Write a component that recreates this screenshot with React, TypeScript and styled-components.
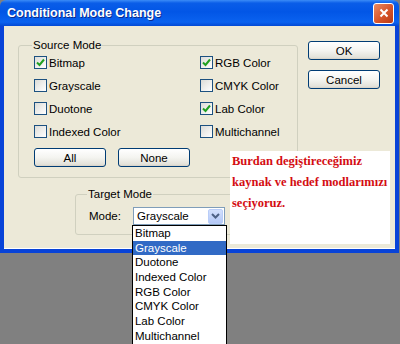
import React from 'react';
import { styled, createGlobalStyle } from 'styled-components';

const GlobalStyle = createGlobalStyle`
  body {
    margin: 0;
    font-family: "Liberation Sans", Arial, sans-serif;
  }
`;

const sourceModes = [
  { label: 'Bitmap', checked: true },
  { label: 'RGB Color', checked: true },
  { label: 'Grayscale', checked: false },
  { label: 'CMYK Color', checked: false },
  { label: 'Duotone', checked: false },
  { label: 'Lab Color', checked: true },
  { label: 'Indexed Color', checked: false },
  { label: 'Multichannel', checked: false },
];

const targetModes = [
  'Bitmap',
  'Grayscale',
  'Duotone',
  'Indexed Color',
  'RGB Color',
  'CMYK Color',
  'Lab Color',
  'Multichannel',
];

const CheckMark = () => (
  <svg width="9" height="9" viewBox="0 0 9 9">
    <polyline points="1,4.5 3.5,7 8,1.5" fill="none" stroke="#21A121" strokeWidth="2" />
  </svg>
);

const App: React.FC = () => {
  return (
    <Page>
      <GlobalStyle />
      <Window>
        <TitleBar>
          <h1>Conditional Mode Change</h1>
          <CloseButton>
            <svg width="10" height="10" viewBox="0 0 10 10">
              <path d="M1.5 1.5 L8.5 8.5 M8.5 1.5 L1.5 8.5" stroke="#fff" strokeWidth="2" />
            </svg>
          </CloseButton>
        </TitleBar>
        <Frame>
          <LeftArea>
            <GroupBox $width={280} $height={140}>
              <Legend>Source Mode</Legend>
              <CheckGrid>
                {sourceModes.map((m) => (
                  <CheckRow key={m.label}>
                    <CheckBox>{m.checked && <CheckMark />}</CheckBox>
                    <span>{m.label}</span>
                  </CheckRow>
                ))}
              </CheckGrid>
              <ButtonRow>
                <XpButton>All</XpButton>
                <XpButton>None</XpButton>
              </ButtonRow>
            </GroupBox>
            <TargetWrap>
              <GroupBox $width={158} $height={48}>
                <Legend>Target Mode</Legend>
                <ModeRow>
                  <span>Mode:</span>
                  <SelectBox>
                    <span>Grayscale</span>
                    <ArrowButton>
                      <svg width="9" height="6" viewBox="0 0 9 6">
                        <polyline points="1,1 4.5,4.5 8,1" fill="none" stroke="#4D6185" strokeWidth="2" />
                      </svg>
                    </ArrowButton>
                    <DropList>
                      {targetModes.map((t) => (
                        <DropItem key={t} $active={t === 'Grayscale'}>
                          {t}
                        </DropItem>
                      ))}
                    </DropList>
                  </SelectBox>
                </ModeRow>
              </GroupBox>
            </TargetWrap>
          </LeftArea>
          <RightArea>
            <XpButton>OK</XpButton>
            <XpButton>Cancel</XpButton>
          </RightArea>
        </Frame>
      </Window>
      <Note>
        <p>Burdan degiştireceğimiz</p>
        <p>kaynak ve hedef modlarımızı</p>
        <p>seçiyoruz.</p>
      </Note>
    </Page>
  );
};

export default App;

const Page = styled.div`
  position: relative;
  width: 400px;
  height: 344px;
  background: #808080;
  overflow: hidden;
`;

const Window = styled.div`
  width: 399px;
  height: 253px;
  display: flex;
  flex-direction: column;
`;

const TitleBar = styled.div`
  height: 26px;
  flex-shrink: 0;
  display: flex;
  align-items: center;
  justify-content: space-between;
  padding: 0 5px 0 7px;
  border-radius: 6px 6px 0 0;
  background: linear-gradient(
    to bottom,
    #3b8cf7 0%,
    #0a5de8 12%,
    #0256e6 45%,
    #0a62ef 85%,
    #0349d4 100%
  );
  > h1 {
    margin: 0;
    color: #fff;
    font-size: 12.5px;
    font-weight: bold;
    font-family: "Liberation Sans", Arial, sans-serif;
    text-shadow: 1px 1px 0 #0a2a8a;
  }
`;

const CloseButton = styled.div`
  width: 19px;
  height: 19px;
  display: flex;
  align-items: center;
  justify-content: center;
  border: 1px solid #fff;
  border-radius: 3px;
  background: linear-gradient(135deg, #e98a62, #d6542a 55%, #b93a14);
`;

const Frame = styled.div`
  flex: 1;
  display: flex;
  background: #ece9d8;
  border-left: 4px solid #0843d8;
  border-right: 4px solid #0843d8;
  border-bottom: 4px solid #0843d8;
  padding: 12px 0 0 14px;
  box-shadow: inset 0 -1px 0 #fff;
`;

const LeftArea = styled.div`
  width: 280px;
  display: flex;
  flex-direction: column;
`;

const RightArea = styled.div`
  display: flex;
  flex-direction: column;
  gap: 10px;
  margin-left: 10px;
  padding-top: 3px;
`;

const GroupBox = styled.fieldset<{ $width: number; $height: number }>`
  box-sizing: border-box;
  width: ${(p) => p.$width}px;
  height: ${(p) => p.$height}px;
  margin: 0;
  padding: 0 0 0 15px;
  border: 1px solid #d0d0bf;
  border-radius: 3px;
  font-size: 11.5px;
  color: #000;
`;

const Legend = styled.legend`
  padding: 0 1px;
  margin-left: -2px;
  font-size: 11.5px;
  line-height: 14px;
  color: #000;
`;

const CheckGrid = styled.div`
  display: grid;
  grid-template-columns: 166px 1fr;
  grid-auto-rows: 23px;
  margin-top: -1px;
`;

const CheckRow = styled.div`
  display: flex;
  align-items: center;
  gap: 2px;
  font-size: 11.5px;
`;

const CheckBox = styled.span`
  box-sizing: border-box;
  width: 13px;
  height: 13px;
  display: flex;
  align-items: center;
  justify-content: center;
  border: 1px solid #1c5180;
  background: linear-gradient(135deg, #dcdcd7, #ffffff);
`;

const ButtonRow = styled.div`
  display: flex;
  gap: 12px;
  margin-top: 5px;
`;

const XpButton = styled.div`
  box-sizing: border-box;
  width: 72px;
  height: 19px;
  display: flex;
  align-items: center;
  justify-content: center;
  border: 1px solid #003c74;
  border-radius: 3px;
  background: linear-gradient(to bottom, #ffffff 0%, #f4f4f0 50%, #e3e2da 90%, #d6d0c5 100%);
  font-size: 11.5px;
  color: #000;
`;

const TargetWrap = styled.div`
  margin: 9px 0 0 57px;
  > fieldset {
    padding-left: 13px;
  }
`;

const ModeRow = styled.div`
  display: flex;
  align-items: center;
  gap: 12px;
  margin-top: 6px;
  font-size: 11.5px;
`;

const SelectBox = styled.div`
  position: relative;
  box-sizing: border-box;
  width: 92px;
  height: 18px;
  display: flex;
  align-items: center;
  justify-content: space-between;
  padding: 0 1px 0 3px;
  background: #fff;
  border: 1px solid #7f9db9;
  font-size: 11.5px;
`;

const ArrowButton = styled.div`
  width: 15px;
  height: 15px;
  display: flex;
  align-items: center;
  justify-content: center;
  border-radius: 2px;
  background: linear-gradient(to bottom, #d3e0fd, #b4c8f6);
  border: 1px solid #b9cdf8;
  box-sizing: border-box;
`;

const DropList = styled.div`
  position: absolute;
  left: -2px;
  top: 17px;
  width: 95px;
  box-sizing: border-box;
  border: 1px solid #000;
  background: #fff;
  z-index: 2;
`;

const DropItem = styled.div<{ $active: boolean }>`
  height: 14.7px;
  line-height: 14.7px;
  padding-left: 2px;
  font-size: 11.5px;
  color: ${(p) => (p.$active ? '#fff' : '#000')};
  background: ${(p) => (p.$active ? '#316ac5' : 'transparent')};
`;

const Note = styled.div`
  position: absolute;
  left: 230px;
  top: 151px;
  width: 160px;
  height: 93px;
  box-sizing: border-box;
  padding: 1px 0 0 2px;
  background: #fff;
  z-index: 3;
  > p {
    margin: 0;
    height: 21px;
    line-height: 18px;
    font-family: "Liberation Serif", serif;
    font-weight: bold;
    font-size: 12.5px;
    color: #d40d12;
    white-space: nowrap;
  }
`;
